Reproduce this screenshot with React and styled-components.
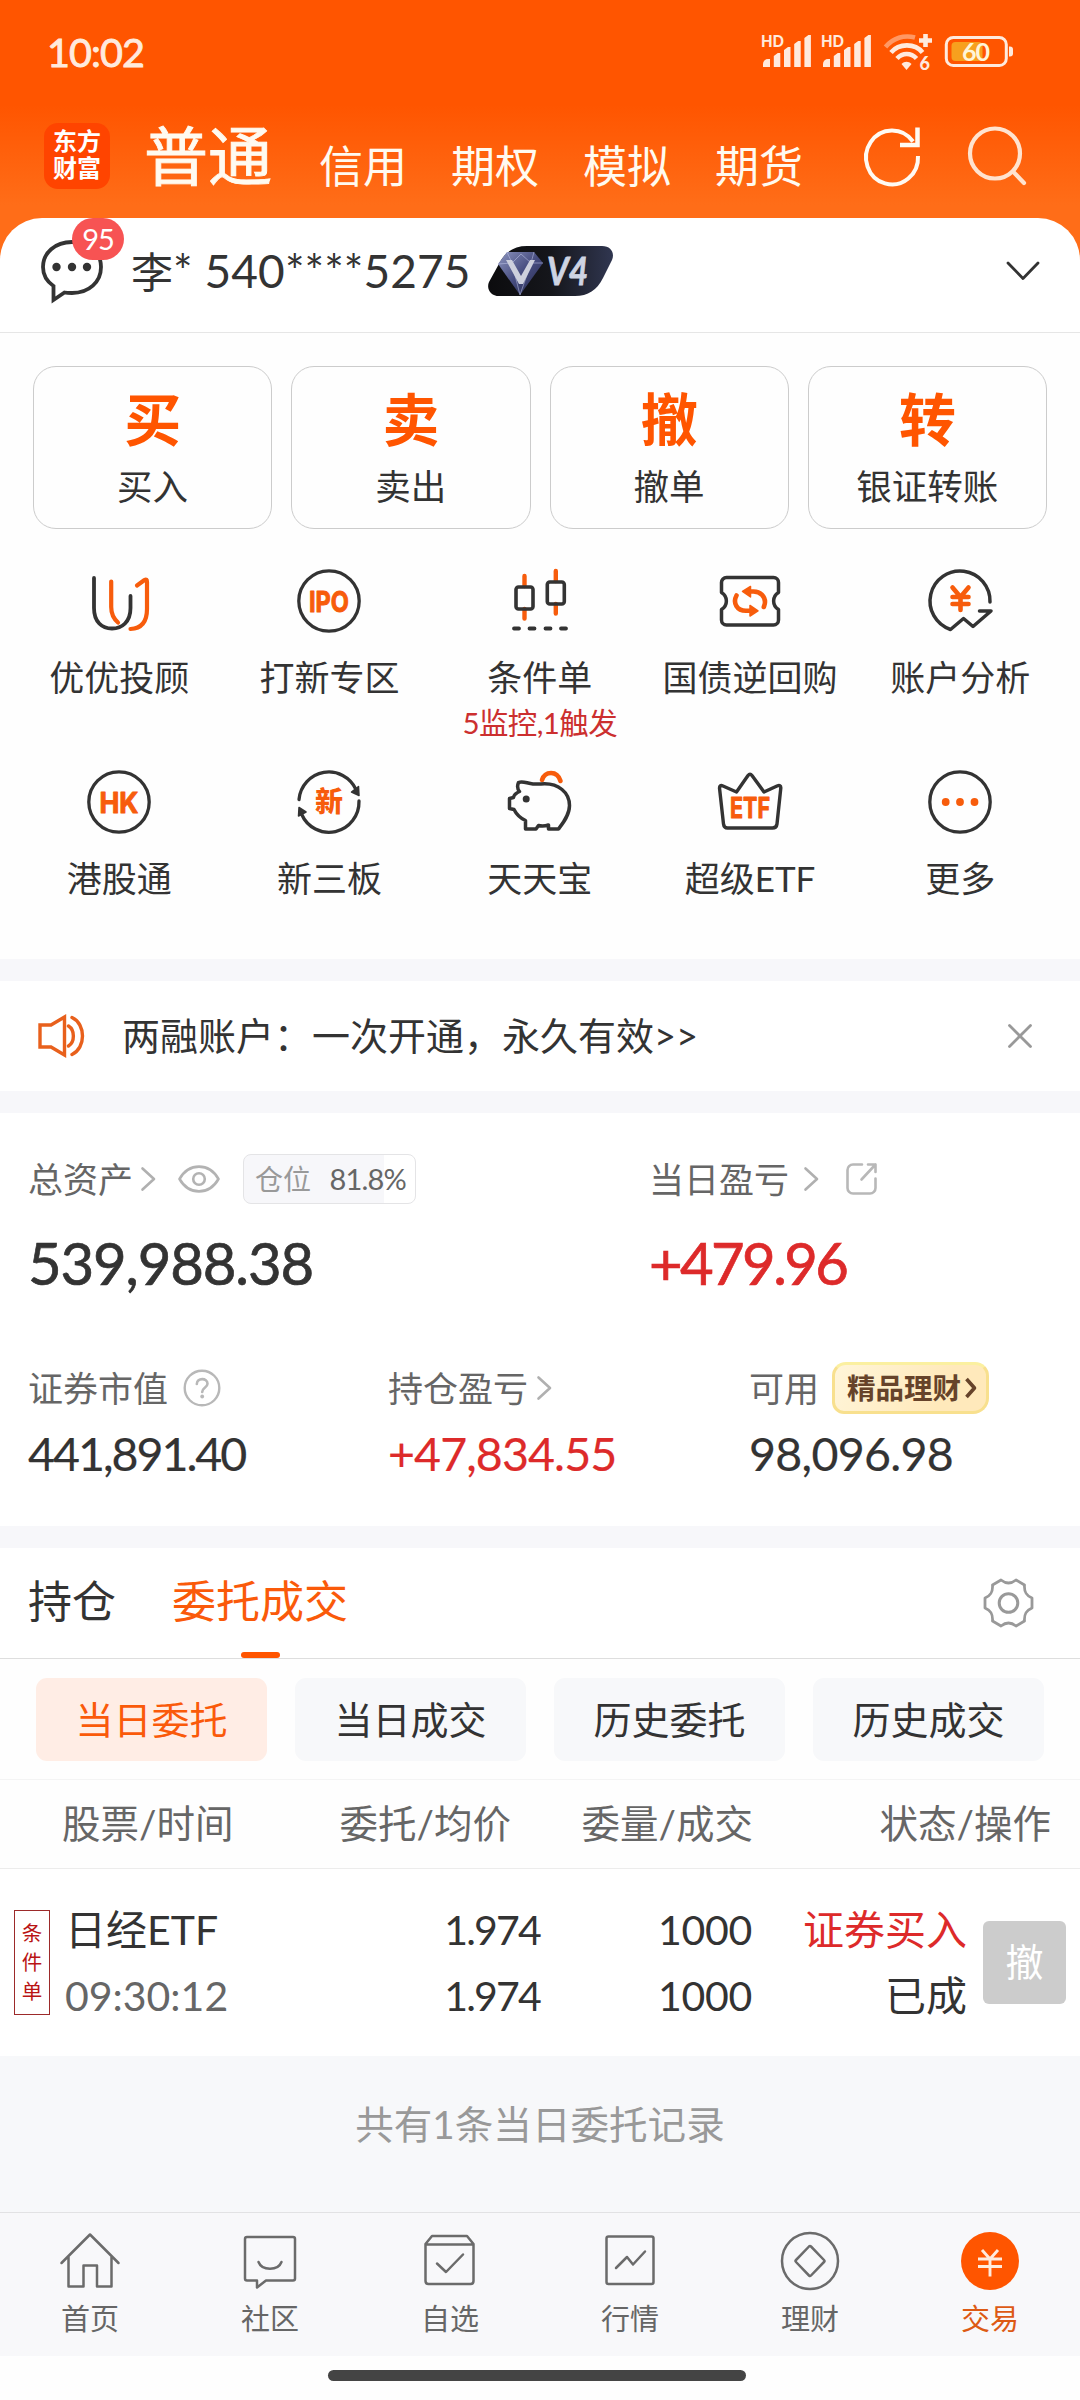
import React from "react";
import styled, { createGlobalStyle } from "styled-components";

const ORANGE = "#fa5a0a";
const INK = "#333333";
const SUB = "#666666";
const RED = "#dd2a2a";
const FONT = 'Lato, "Noto Sans CJK SC", sans-serif';

const GlobalStyle = createGlobalStyle`
  * { box-sizing: border-box; }
  body { margin: 0; background: #fff; font-family: ${FONT}; color: ${INK}; }
  svg { display: block; flex: none; overflow: visible; }
  button { border: 0; padding: 0; background: none; font: inherit; color: inherit; }
`;

const Screen = styled.div`
  width: 1080px;
  height: 2400px;
  display: flex;
  flex-direction: column;
  overflow: hidden;
  background: #fefefe;
`;

/* ---------- header ---------- */
const Header = styled.header`
  height: 260px;
  margin-bottom: -42px;
  background: linear-gradient(#ff5500 0 105px, #ff6d18 205px, #ff6d18);
`;
const StatusBar = styled.div`
  height: 103px;
  padding: 0 66px 0 47px;
  display: flex;
  align-items: center;
  justify-content: space-between;
`;
const Clock = styled.span`
  font-size: 39.5px;
  line-height: 48px;
  letter-spacing: -0.9px;
  color: #ffeadd;
  -webkit-text-stroke: 0.9px #ffeadd;
`;
const AccountNav = styled.nav`
  height: 105px;
  padding: 0 54px 0 44px;
  display: flex;
  align-items: center;
`;
const Logo = styled.div`
  width: 66px;
  height: 66px;
  margin-right: 34px;
  border-radius: 14px;
  background: #ff4400;
  color: #fff;
  font-size: 24px;
  line-height: 27px;
  font-weight: 700;
  text-align: center;
  padding-top: 4px;
`;
const NavMain = styled.span`
  font-size: 64px;
  line-height: 66px;
  color: #fffaf0;
  margin-right: 47px;
  -webkit-text-stroke: 0.9px #fffaf0;
`;
const NavItems = styled.div`
  display: flex;
  gap: 44px;
  font-size: 44px;
  line-height: 50px;
  margin-top: 20px;
  color: #fffaf0;
`;
const NavIcons = styled.div`
  display: flex;
  gap: 48px;
  margin-left: auto;
`;

/* ---------- account row ---------- */
const Account = styled.section`
  height: 115px;
  padding: 0 40px;
  display: flex;
  align-items: center;
  background: #fff;
  border-bottom: 1px solid #e6e6e6;
  border-radius: 42px 42px 0 0;
  padding-bottom: 8px;
`;
const MessageBox = styled.div`
  position: relative;
  width: 91px;
`;
const Badge = styled.span`
  position: absolute;
  left: 32px;
  top: -21px;
  width: 52px;
  height: 42px;
  border-radius: 21px;
  background: #f75353;
  color: #fff;
  font-size: 29px;
  line-height: 41px;
  letter-spacing: -1px;
  text-align: center;
`;
const AccountName = styled.span`
  width: 357px;
  white-space: pre;
  font-size: 42px;
  line-height: 54px;
`;
const Digits = styled.span`
  font-size: 46px;
  letter-spacing: 0.1px;
`;
const Push = styled.div`
  margin-left: auto;
`;

/* ---------- trade actions ---------- */
const Actions = styled.section`
  display: grid;
  grid-template-columns: repeat(4, 1fr);
  gap: 19px;
  padding: 33px 33px 0;
`;
const ActionCard = styled.button`
  height: 163px;
  border: 1px solid #cccccc;
  border-radius: 23px;
  display: flex;
  flex-direction: column;
  align-items: center;
  padding-top: 19px;
`;
const ActionMark = styled.span`
  font-size: 57px;
  line-height: 66px;
  font-weight: 700;
  color: #ff5500;
`;
const ActionLabel = styled.span`
  margin-top: 12px;
  font-size: 35.5px;
  line-height: 46px;
`;

const Services = styled.section`
  display: grid;
  grid-template-columns: repeat(5, 210.3px);
  grid-template-rows: 201px 191px;
  padding: 37px 0 0 14px;
  height: 430px;
`;
const Service = styled.div`
  display: flex;
  flex-direction: column;
  align-items: center;
`;
const ServiceLabel = styled.span`
  margin-top: 18px;
  font-size: 35px;
  line-height: 46px;
`;
const ServiceNote = styled.span`
  margin-top: 2px;
  font-size: 29.5px;
  line-height: 42px;
  letter-spacing: -0.6px;
  color: #cc2f2f;
`;

const Band = styled.div`
  height: 22px;
  flex: none;
  background: #f7f7fa;
`;

/* ---------- notice ---------- */
const Notice = styled.section`
  height: 110px;
  padding: 0 48px 0 37px;
  display: flex;
  align-items: center;
  background: #fff;
`;
const NoticeText = styled.span`
  margin: -2px 0 0 36px;
  font-size: 38px;
  line-height: 50px;
`;

/* ---------- assets ---------- */
const Assets = styled.section`
  height: 413px;
  padding: 40px 30px 0 28px;
  background: #fff;
`;
const AssetRow = styled.div`
  display: grid;
  grid-template-columns: ${(p) => p.$cols};
  margin-bottom: ${(p) => p.$after || 0}px;
`;
const AssetLabel = styled.div`
  display: flex;
  align-items: center;
  height: 52px;
  font-size: 35px;
  line-height: 50px;
  color: ${SUB};
  svg { margin-left: ${(p) => p.$gap || 10}px; }
  svg + svg { margin-left: ${(p) => p.$gap2 || 0}px; }
`;
const AssetValue = styled.div`
  font-size: ${(p) => (p.$big ? 58 : 46.5)}px;
  line-height: ${(p) => (p.$big ? 70 : 56)}px;
  margin-top: ${(p) => (p.$big ? 23 : 11)}px;
  letter-spacing: ${(p) => p.$track || 0}px;
  color: ${(p) => (p.$red ? RED : INK)};
  -webkit-text-stroke: ${(p) => (p.$big ? 0.7 : 0.2)}px currentColor;
`;
const Position = styled.span`
  display: flex;
  align-items: center;
  justify-content: space-between;
  width: 173px;
  height: 50px;
  margin-left: 23px;
  padding: 0 9px 0 11px;
  border: 1px solid #e4e4e6;
  border-radius: 8px;
  background: linear-gradient(90deg, #f7f7fa 82%, #fff 82%);
  font-size: 28px;
  line-height: 48px;
  color: #999;
`;
const PositionValue = styled.span`
  font-size: 29px;
  letter-spacing: -0.8px;
  color: ${SUB};
`;
const Promo = styled.span`
  display: flex;
  align-items: center;
  width: 157px;
  height: 52px;
  margin-left: 13px;
  padding-left: 12px;
  border: 3px solid #f8e08e;
  border-top-color: #fbf0a0;
  border-radius: 14px 14px 16px 12px;
  background: linear-gradient(115deg, #fff5d9, #ffe9bb 70%);
  font-size: 28.5px;
  line-height: 44px;
  font-weight: 700;
  color: #66432a;
  svg { margin-left: 4px; }
`;

/* ---------- orders ---------- */
const Tabs = styled.div`
  height: 111px;
  padding: 0 46px 0 28px;
  display: flex;
  border-bottom: 1px solid #dedede;
  background: #fff;
  align-items: stretch;
`;
const Tab = styled.div`
  position: relative;
  margin-right: 56px;
  font-size: 44px;
  line-height: 106px;
  color: ${(p) => (p.$on ? ORANGE : INK)};
  &::after {
    content: "";
    display: ${(p) => (p.$on ? "block" : "none")};
    position: absolute;
    left: 50%;
    bottom: 0;
    width: 39px;
    height: 6px;
    margin-left: -19px;
    border-radius: 3px;
    background: #ff5500;
  }
`;
const TabIcon = styled.div`
  margin-left: auto;
  align-self: center;
`;
const Filters = styled.div`
  display: grid;
  grid-template-columns: repeat(4, 1fr);
  gap: 28px;
  padding: 19px 36px 18px;
  border-bottom: 1px solid #f4f4f4;
`;
const Filter = styled.button`
  height: 83px;
  border-radius: 11px;
  background: ${(p) => (p.$on ? "#ffede5" : "#f7f8fa")};
  color: ${(p) => (p.$on ? ORANGE : INK)};
  font-size: 38px;
  line-height: 80px;
  padding-bottom: 2px;
`;
const TableHead = styled.div`
  display: grid;
  grid-template-columns: 178px 271px 242px 298px;
  height: 89px;
  padding-left: 62px;
  border-bottom: 1px solid #ececec;
  font-size: 38.5px;
  line-height: 86px;
  white-space: nowrap;
  color: ${SUB};
  span + span { text-align: right; }
`;
const OrderRow = styled.div`
  display: grid;
  grid-template-columns: 36px 1fr 240px 212px 215px 99px;
  height: 187px;
  padding: 0 14px;
  align-items: center;
  background: #fff;
`;
const OrderTag = styled.div`
  width: 36px;
  height: 105px;
  margin-top: 0;
  padding-top: 8px;
  border: 1px solid #9c2a2a;
  font-size: 20.5px;
  line-height: 29px;
  color: #b91414;
  text-align: center;
`;
const Cell = styled.div`
  display: flex;
  flex-direction: column;
  align-items: ${(p) => (p.$left ? "flex-start" : "flex-end")};
  padding-left: ${(p) => (p.$left ? 15 : 0)}px;
  font-size: 41px;
  line-height: 66px;
  white-space: nowrap;
  letter-spacing: ${(p) => p.$track || 0}px;
`;
const Tone = styled.span`
  color: ${(p) => p.$c};
`;
const Cancel = styled.button`
  width: 83px;
  height: 83px;
  border-radius: 6px;
  background: #cccccc;
  color: #fff;
  font-size: 38px;
  line-height: 78px;
  padding-bottom: 3px;
  justify-self: end;
`;
const Summary = styled.div`
  height: 156px;
  flex: none;
  background: #f7f8fa;
  color: #999;
  font-size: 38.6px;
  line-height: 137px;
  text-align: center;
`;

/* ---------- bottom navigation ---------- */
const BottomNav = styled.nav`
  display: grid;
  grid-template-columns: repeat(6, 1fr);
  height: 144px;
  flex: none;
  padding-top: 17px;
  border-top: 1px solid #e2e2e4;
  background: #f8f8fa;
`;
const BottomItem = styled.div`
  display: flex;
  flex-direction: column;
  align-items: center;
  font-size: 29px;
  line-height: 40px;
  gap: 9px;
  color: ${(p) => (p.$on ? "#dd5a14" : SUB)};
`;
const HomeBar = styled.div`
  width: 418px;
  height: 11px;
  margin: 14px auto 0 328px;
  border-radius: 6px;
  background: #444;
`;

/* ---------- drawings ---------- */
const line = (stroke, w) => ({
  fill: "none",
  stroke,
  strokeWidth: w,
  strokeLinecap: "round",
  strokeLinejoin: "round",
});
const OR = "#f75c0c";

const Signal = ({ x }) => (
  <g transform={`translate(${x} 0)`} fill="#ffeadd">
    <text x="0" y="15" fontSize="17" fontWeight="900" textLength="23" lengthAdjust="spacingAndGlyphs">HD</text>
    <path d="M2 35v-3a5 5 0 0 1 5-5h2v8z" />
    <path d="M12.8 35V24l4-3h2.5v14zM23 35V18l4-3h2.500v20zM33.200 35V12l4-3h2.500v26zM43.400 35V6l4-3h2.500v32z" />
  </g>
);

const StatusIcons = () => (
  <svg width="253" height="40" viewBox="0 0 253 40">
    <Signal x={0} />
    <Signal x={60} />
    <g fill="none" stroke="#ffeadd" strokeWidth="4.6">
      <path d="M124.500 15C132 6 143 2.500 154 5.500" opacity=".45" />
      <path d="M130 20.500C138 11 154 11 161.500 20.500" />
      <path d="M136 26.500C141.500 20.500 150 20.500 155.500 26.500" />
      <path d="M164.500 2v13M158 8.500h13" />
    </g>
    <path d="M145.500 38l-5-6c3-3 7-3 10 0z" fill="#ffeadd" />
    <text x="158.500" y="38" fontSize="18" fontWeight="900" fill="#ffeadd">6</text>
    <rect x="190.500" y="10" width="31" height="19" rx="4" fill="#f7a01e" />
    <rect x="185.300" y="5.500" width="60" height="28" rx="7" fill="none" stroke="#ffeadd" strokeWidth="3" />
    <path d="M248 14.500h1a3 3 0 0 1 3 3v4a3 3 0 0 1-3 3h-1z" fill="#ffeadd" />
    <text x="201" y="28.500" fontSize="25" fontWeight="700" fill="#fff5d8" textLength="28">60</text>
  </svg>
);

const Refresh = () => (
  <svg width="56" height="60" viewBox="0 0 56 60" fill="none" stroke="#fffaf3" strokeWidth="4">
    <path d="M54 30A26 27 0 1 1 49 15.500" />
    <path d="M53.500 1.500V19H36" strokeWidth="4.500" />
  </svg>
);
const Search = () => (
  <svg width="58" height="60" viewBox="0 0 58 60" {...line("#ffe3cf", 4.2)}>
    <circle cx="27" cy="27.500" r="25" />
    <path d="M45 45.500L56 57" />
  </svg>
);

const Bubble = () => (
  <svg width="64" height="64" viewBox="0 0 64 64">
    <path d="M32 3C15 3 3 14 3 28c0 8 4 14.500 10.500 19V61l11-7.500c2.500.5 5 .5 7.500.5 17 0 29-11 29-26S49 3 32 3z" {...line(INK, 3.8)} strokeLinejoin="miter" />
    <g fill={INK}>
      <circle cx="16.500" cy="28" r="4.200" />
      <circle cx="32" cy="28" r="4.200" />
      <circle cx="47" cy="28" r="4.200" />
    </g>
  </svg>
);

const LevelBadge = () => (
  <svg width="125" height="50" viewBox="0 0 125 50">
    <defs>
      <linearGradient id="lv" x1="0" x2="1">
        <stop offset="0" stopColor="#0c0c0e" />
        <stop offset=".5" stopColor="#15161b" />
        <stop offset="1" stopColor="#303650" />
      </linearGradient>
      <linearGradient id="gem" x1="0" y1="0" x2="1" y2="1">
        <stop offset="0" stopColor="#8d95bf" />
        <stop offset=".5" stopColor="#474d80" />
        <stop offset="1" stopColor="#22264a" />
      </linearGradient>
    </defs>
    <path d="M39 0H114c9 0 13 7 10 14L115 32C109 44 100 50 87 50H11C3 50-2 43 1 36L12 16C18 5 27 0 39 0z" fill="url(#lv)" />
    <path d="M19 6H46L55 17L32 49L10 18z" fill="url(#gem)" />
    <path d="M19 6L24 17L32 49L43 17L46 6M10 18L24 17M43 17L55 17M24 17L33 8L43 17" fill="none" stroke="#c7cdf0" strokeWidth="1" opacity=".5" />
    <path d="M18 14H24L33 30L42 14H47L35 38H31z" fill="#cdd0dd" />
    <text x="59" y="39" fontSize="39" fontWeight="700" fontStyle="italic" fill="#ced4e3" stroke="#ced4e3" strokeWidth=".8" textLength="41" lengthAdjust="spacingAndGlyphs">V4</text>
  </svg>
);

const ChevronDown = () => (
  <svg width="34" height="20" viewBox="0 0 34 20" {...line(INK, 2.8)}>
    <path d="M2 2L17 17.500L32 2" />
  </svg>
);
const ChevronRight = () => (
  <svg width="15" height="24" viewBox="0 0 15 24" {...line("#b0b0b0", 2.6)}>
    <path d="M1.500 1.500L13 12L1.500 22.500" />
  </svg>
);

const Glyph = ({ children }) => (
  <svg width="70" height="70" viewBox="0 0 70 70">{children}</svg>
);
const Ring = () => <circle cx="35" cy="35" r="30.200" {...line(INK, 3.3)} />;
const IconWord = ({ y, children, w = 40 }) => (
  <text x="35" y={y} textAnchor="middle" fontSize="29" fontWeight="700" fontFamily="Inter" fill={OR} textLength={w} lengthAdjust="spacingAndGlyphs" stroke={OR} strokeWidth="1" strokeLinejoin="round">
    {children}
  </text>
);

const icons = {
  advisor: (
    <Glyph>
      <path d="M10 12V42C10 56 18 62.500 28 62.500S46.500 56 46.500 42V30" {...line(INK, 3.8)} />
      <path d="M27.200 15.500V41C27.200 49 30 53 34 56.500M53 19.500L60.500 14Q63 12.500 63 16V43C63 56 57 62.500 46.500 63" {...line(OR, 4.2)} />
    </Glyph>
  ),
  ipo: (
    <Glyph>
      <Ring />
      <IconWord y="46">IPO</IconWord>
    </Glyph>
  ),
  candle: (
    <Glyph>
      <path d="M19.500 10V20M19.500 43V52.500M50.800 5V15M50.800 38V47.500" {...line(OR, 4.4)} />
      <rect x="11" y="21" width="17" height="22" rx="2.500" {...line(INK, 3.6)} />
      <rect x="42.300" y="16" width="17" height="22" rx="2.500" {...line(INK, 3.6)} />
      <path d="M9 62.500H14M24.500 62.500H29.500M40.500 62.500H45.500M56 62.500H61" {...line(INK, 3.8)} />
    </Glyph>
  ),
  repo: (
    <Glyph>
      <path d="M11.500 11.500H58.500A5 5 0 0 1 63.500 16.500V26.500C57 30.500 57 39.500 63.500 43.500V54A5 5 0 0 1 58.500 59H11.500A5 5 0 0 1 6.500 54V43.500C13 39.500 13 30.500 6.500 26.500V16.500A5 5 0 0 1 11.500 11.500Z" {...line(INK, 3.5)} />
      <path d="M35 25.500H38.500C46 25.500 50 31 50 36C50 38 49.500 39 48.800 41M21.500 29.500C17.500 37 22 44.800 31 44.800H35" {...line(OR, 4.6)} />
      <path d="M27.500 25.500L35.500 20.500V31ZM43 44.800L35 39.500V50Z" {...line(OR, 1.5)} fill={OR} />
    </Glyph>
  ),
  analysis: (
    <Glyph>
      <path d="M65 36A30 30 0 1 0 25.500 63.500L38.500 52.500L48 60.500L66 45H54.500" {...line(INK, 3.5)} />
      <path d="M27.500 21.500L35.500 31L43.500 21.500M27.500 31H43.500M27.500 38H43.500M35.500 31V44" {...line(OR, 4.6)} />
    </Glyph>
  ),
  hk: (
    <Glyph>
      <Ring />
      <IconWord y="46" w={39}>HK</IconWord>
    </Glyph>
  ),
  neeq: (
    <Glyph>
      <path d="M5 32.500A30 30.500 0 0 1 62 22.500M65 34A30 30.500 0 0 1 7.500 47" {...line(INK, 3.3)} />
      <path d="M64.500 19.500L65 28.500L57.500 25ZM4.500 49L5 40.500L12 45Z" {...line(INK, 1.5)} fill={INK} />
      <text x="35" y="45" textAnchor="middle" fontSize="28" fontWeight="900" fill={OR}>新</text>
    </Glyph>
  ),
  piggy: (
    <Glyph>
      <path d="M37 13C40 4 52 3 55.500 14" {...line(OR, 4.6)} />
      <path d="M13.500 15.500C18 13.500 22 16.500 28 17H36C54 15.500 64.500 26 64.500 38.500C64.500 48 58 56 53.500 62H43.500V58C39 59.500 37 59.500 33.500 58.500L31 62H20.500V53.500C14 50.500 11 46.500 9 42.500L4.500 41.500V31.500L8.500 30.500C9 28 11 26 14.500 24.500C12 21.500 12 19 13.500 15.500Z" {...line(INK, 3.5)} />
      <circle cx="21.200" cy="32" r="3.500" fill={INK} />
    </Glyph>
  ),
  etf: (
    <Glyph>
      <path d="M33 8.500Q35 6 37 8.500L49 25L62 19Q66 17.500 65.800 21L62 57Q61.500 61 57.500 61H12.500Q9 61 8.500 57L4.500 21Q4.500 17.500 8 19L21.500 25Z" {...line(INK, 3.4)} />
      <IconWord y="51">ETF</IconWord>
    </Glyph>
  ),
  more: (
    <Glyph>
      <Ring />
      <g fill={OR}>
        <circle cx="20.700" cy="35" r="3.900" />
        <circle cx="35" cy="35" r="3.900" />
        <circle cx="49.500" cy="35" r="3.900" />
      </g>
    </Glyph>
  ),
};

const Speaker = () => (
  <svg width="49" height="42" viewBox="0 0 49 42" {...line("#e8601c", 3.4)}>
    <path d="M3 10H14L27.500 2V40L14 32H3Z" strokeLinejoin="miter" />
    <path d="M31.500 11C38 15 38 27 31.500 31M35 2.500C49 9 49 33 35 39.500" />
  </svg>
);
const Close = () => (
  <svg width="24" height="24" viewBox="0 0 24 24" {...line("#999", 2.8)}>
    <path d="M1.500 1.500L22.500 22.500M22.500 1.500L1.500 22.500" />
  </svg>
);
const Eye = () => (
  <svg width="42" height="28" viewBox="0 0 42 28" {...line("#b3b3b3", 2.6)}>
    <path d="M1.500 14C11-2.500 31-2.500 40.500 14C31 30.500 11 30.500 1.500 14Z" />
    <circle cx="21" cy="14" r="5.800" />
  </svg>
);
const Share = () => (
  <svg width="31" height="32" viewBox="0 0 31 32" {...line("#b8b8b8", 2.6)}>
    <path d="M16 1.500H7A5.500 5.500 0 0 0 1.500 7V25A5.500 5.500 0 0 0 7 30.500H24A5.500 5.500 0 0 0 29.500 25V15.500" />
    <path d="M22 1.500H29.500V9M29.500 1.500L15.500 16.500" />
  </svg>
);
const Help = () => (
  <svg width="38" height="38" viewBox="0 0 38 38">
    <circle cx="19" cy="19" r="17.300" {...line("#b8b8b8", 2.4)} />
    <path d="M13.800 15C13.800 8.500 24.500 8.500 24.500 14.800C24.500 18.500 19.200 18.500 19.200 23" {...line("#b8b8b8", 2.6)} />
    <circle cx="19.200" cy="27.500" r="1.900" fill="#b8b8b8" />
  </svg>
);
const Gear = () => (
  <svg width="51" height="50" viewBox="0 0 51 50" {...line("#999", 2.8)}>
    <path d="M18 2C23 6 28 6 33 2L41.500 7C41 14 43 17.500 49 20V30C43 32.500 41 36 41.500 43L33 48C28 44 23 44 18 48L9.500 43C10 36 8 32.500 2 30V20C8 17.500 10 14 9.500 7Z" />
    <circle cx="25.500" cy="25" r="9.300" strokeWidth="3" />
  </svg>
);
const PromoArrow = () => (
  <svg width="12" height="20" viewBox="0 0 12 20" {...line("#66432a", 3.6)} strokeLinecap="butt">
    <path d="M1.500 1L9.500 10L1.500 19" />
  </svg>
);

const NavGlyph = ({ children }) => (
  <svg width="60" height="60" viewBox="0 0 60 60" {...line("#6b6b6b", 2.5)}>{children}</svg>
);
const navIcons = {
  home: (
    <NavGlyph>
      <path d="M1.500 33L30 4.500L58.500 33M8.500 27V56.500H23.500V35.500H37V56.500H51.500V27" />
    </NavGlyph>
  ),
  community: (
    <NavGlyph>
      <path d="M7 7H53Q55 7 55 9V48.500Q55 50.500 53 50.500H26L17 57.500V50.500H7Q5 50.500 5 48.500V9Q5 7 7 7Z" />
      <path d="M18.500 32C22 41 38 41 41.500 32" />
    </NavGlyph>
  ),
  watch: (
    <NavGlyph>
      <path d="M5.500 14L12 6H47L53.500 14V51Q53.500 54 50.500 54H8.500Q5.500 54 5.500 51ZM5.500 14.500H53.500" />
      <path d="M17 33.500L26 42L43 24.500" />
    </NavGlyph>
  ),
  market: (
    <NavGlyph>
      <rect x="6.500" y="6.500" width="47" height="47.500" rx="2" />
      <path d="M16 38L27 27L33 34.500L45 21.500" />
    </NavGlyph>
  ),
  wealth: (
    <NavGlyph>
      <circle cx="30" cy="31" r="28" />
      <path d="M29 16.500Q30 15.500 31 16.500L44 30Q45 31 44 32L31 45.500Q30 46.500 29 45.500L16 32Q15 31 16 30Z" />
    </NavGlyph>
  ),
  trade: (
    <NavGlyph>
      <circle cx="30" cy="31" r="29" fill="#ff5500" stroke="none" />
      <path d="M22 20L30 29L38 20M18 29H42M18 36.500H42M30 29V46.500" stroke="#ffeadd" strokeLinecap="butt" strokeWidth="2.900" />
    </NavGlyph>
  ),
};

const actions = [["买", "买入"], ["卖", "卖出"], ["撤", "撤单"], ["转", "银证转账"]];
const services = [
  ["advisor", "优优投顾"],
  ["ipo", "打新专区"],
  ["candle", "条件单", "5监控,1触发"],
  ["repo", "国债逆回购"],
  ["analysis", "账户分析"],
  ["hk", "港股通"],
  ["neeq", "新三板"],
  ["piggy", "天天宝"],
  ["etf", "超级ETF"],
  ["more", "更多"],
];
const filters = ["当日委托", "当日成交", "历史委托", "历史成交"];
const bottom = [
  ["home", "首页"],
  ["community", "社区"],
  ["watch", "自选"],
  ["market", "行情"],
  ["wealth", "理财"],
  ["trade", "交易"],
];

export default function App() {
  return (
    <>
      <GlobalStyle />
      <Screen>
        <Header>
          <StatusBar>
            <Clock>10:02</Clock>
            <StatusIcons />
          </StatusBar>
          <AccountNav>
            <Logo>东方<br />财富</Logo>
            <NavMain>普通</NavMain>
            <NavItems>
              <span>信用</span>
              <span>期权</span>
              <span>模拟</span>
              <span>期货</span>
            </NavItems>
            <NavIcons>
              <Refresh />
              <Search />
            </NavIcons>
          </AccountNav>
        </Header>

        <Account>
          <MessageBox>
            <Bubble />
            <Badge>95</Badge>
          </MessageBox>
          <AccountName>李<Digits>* 540****5275</Digits></AccountName>
          <LevelBadge />
          <Push><ChevronDown /></Push>
        </Account>

        <Actions>
          {actions.map(([mark, label]) => (
            <ActionCard key={label}>
              <ActionMark>{mark}</ActionMark>
              <ActionLabel>{label}</ActionLabel>
            </ActionCard>
          ))}
        </Actions>

        <Services>
          {services.map(([icon, label, note]) => (
            <Service key={label}>
              {icons[icon]}
              <ServiceLabel>{label}</ServiceLabel>
              {note && <ServiceNote>{note}</ServiceNote>}
            </Service>
          ))}
        </Services>

        <Band />
        <Notice>
          <Speaker />
          <NoticeText>两融账户：一次开通，永久有效&gt;&gt;</NoticeText>
          <Push><Close /></Push>
        </Notice>
        <Band />

        <Assets>
          <AssetRow $cols="621px 1fr" $after={64}>
            <div>
              <AssetLabel $gap={8} $gap2={22}>
                总资产<ChevronRight /><Eye />
                <Position>仓位<PositionValue>81.8%</PositionValue></Position>
              </AssetLabel>
              <AssetValue $big $track={-1.1}>539,988.38</AssetValue>
            </div>
            <div>
              <AssetLabel $gap={15} $gap2={27}>
                当日盈亏<ChevronRight /><Share />
              </AssetLabel>
              <AssetValue $big $red $track={-2.6}>+479.96</AssetValue>
            </div>
          </AssetRow>
          <AssetRow $cols="360px 361px 1fr">
            <div>
              <AssetLabel $gap={15}>证券市值<Help /></AssetLabel>
              <AssetValue $track={-2}>441,891.40</AssetValue>
            </div>
            <div>
              <AssetLabel $gap={9}>持仓盈亏<ChevronRight /></AssetLabel>
              <AssetValue $red $track={-0.9}>+47,834.55</AssetValue>
            </div>
            <div>
              <AssetLabel>可用<Promo>精品理财<PromoArrow /></Promo></AssetLabel>
              <AssetValue $track={-0.7}>98,096.98</AssetValue>
            </div>
          </AssetRow>
        </Assets>
        <Band />

        <Tabs>
          <Tab>持仓</Tab>
          <Tab $on>委托成交</Tab>
          <TabIcon><Gear /></TabIcon>
        </Tabs>
        <Filters>
          {filters.map((f, i) => (
            <Filter key={f} $on={i === 0}>{f}</Filter>
          ))}
        </Filters>
        <TableHead>
          <span>股票/时间</span>
          <span>委托/均价</span>
          <span>委量/成交</span>
          <span>状态/操作</span>
        </TableHead>
        <OrderRow>
          <OrderTag>条<br />件<br />单</OrderTag>
          <Cell $left>
            <span>日经ETF</span>
            <Tone $c={SUB}>09:30:12</Tone>
          </Cell>
          <Cell $track={-1.8}>
            <span>1.974</span>
            <span>1.974</span>
          </Cell>
          <Cell $track={-0.3}>
            <span>1000</span>
            <span>1000</span>
          </Cell>
          <Cell>
            <Tone $c={RED}>证券买入</Tone>
            <span>已成</span>
          </Cell>
          <Cancel>撤</Cancel>
        </OrderRow>
        <Summary>共有1条当日委托记录</Summary>

        <BottomNav>
          {bottom.map(([icon, label]) => (
            <BottomItem key={icon} $on={icon === "trade"}>
              {navIcons[icon]}
              {label}
            </BottomItem>
          ))}
        </BottomNav>
        <HomeBar />
      </Screen>
    </>
  );
}
